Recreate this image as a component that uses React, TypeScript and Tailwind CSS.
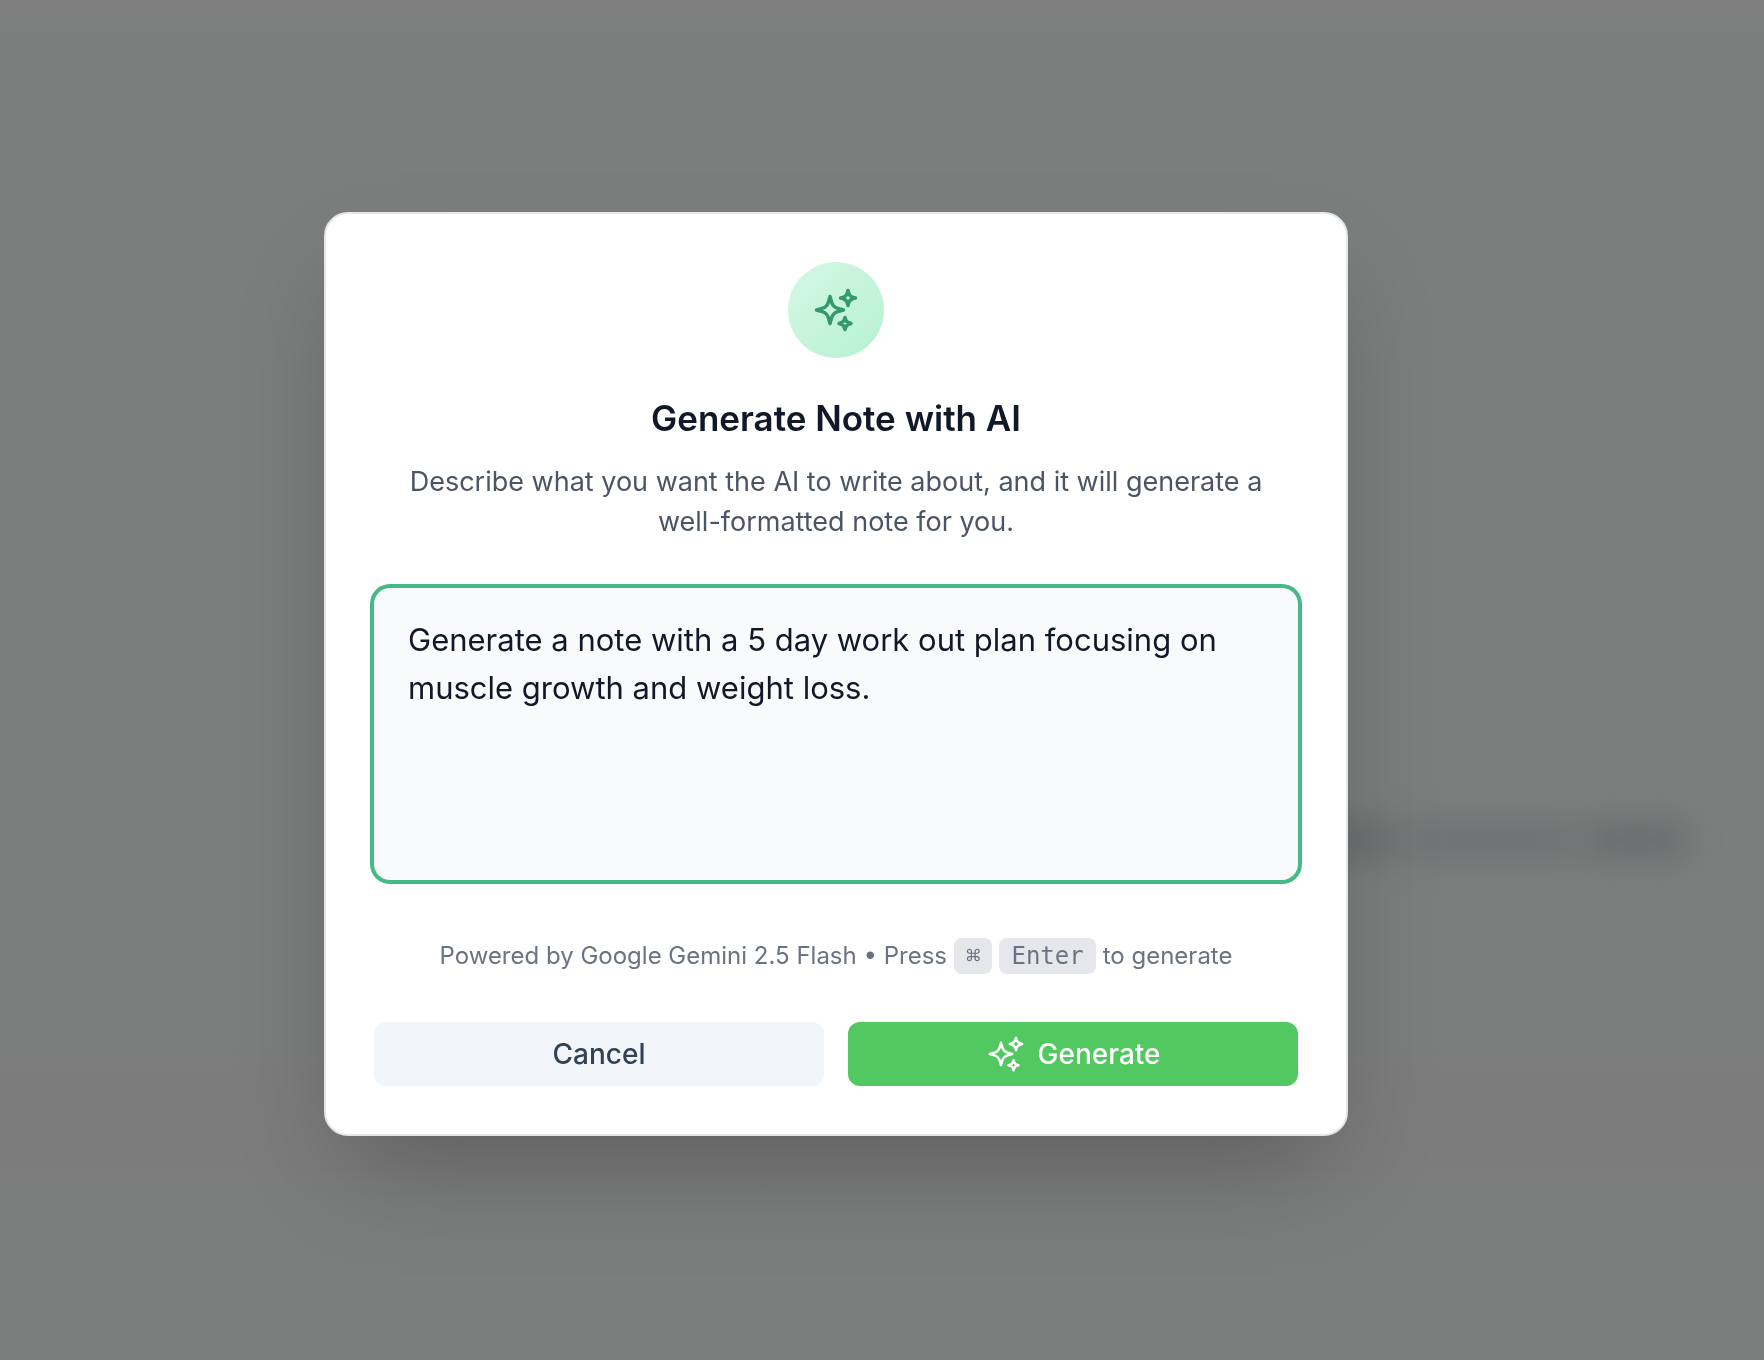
import React, { useState } from 'react';
import { HiOutlineSparkles } from 'react-icons/hi2';

// Empty state of the editor, seen blurred behind the dialog
const EditorBackdrop: React.FC = () => (
  <div
    className="flex min-h-screen flex-col bg-[linear-gradient(#7b7e7c_77%,#7d7c7c_79%,#7d7c7c_86%,#7b7e7c_88%)]"
    aria-hidden="true"
  >
    <div className="h-10 bg-gradient-to-b from-[#7f7f7f] to-[#7b7e7c]" />
    <div className="flex flex-1 items-center justify-end pt-70 pr-20">
      <div className="flex gap-3 blur-[16px]">
        <div className="h-8 w-30 bg-[#6b6b6e]" />
        <div className="h-8 w-42 bg-[#6e6e72]" />
        <div className="h-8 w-24 bg-[#69696d]" />
      </div>
    </div>
  </div>
);

const GenerateNoteDialog: React.FC = () => {
  const [prompt, setPrompt] = useState(
    'Generate a note with a 5 day work out plan focusing on muscle growth and weight loss.'
  );

  return (
    <div
      role="dialog"
      aria-labelledby="dialog-title"
      className="flex w-full max-w-5xl flex-col items-center rounded-3xl border-2 border-[#e4e6ea] bg-white p-12 shadow-[0_50px_100px_-24px_rgba(0,0,0,0.25)]"
    >
      <div className="flex h-24 w-24 items-center justify-center rounded-full bg-gradient-to-br from-[#d6f8e5] to-[#b5f1d1]">
        <HiOutlineSparkles className="h-12 w-12 text-[#35996b]" strokeWidth={1.75} />
      </div>

      <h2 id="dialog-title" className="mt-9 text-[35px] leading-[48px] font-semibold text-[#111827]">
        Generate Note with AI
      </h2>
      <p className="mt-5 px-6 text-center text-[27px] leading-[40px] text-[#4b5563]">
        Describe what you want the AI to write about, and it will generate a well-formatted note for you.
      </p>

      <textarea
        aria-label="Note prompt"
        value={prompt}
        onChange={(e) => setPrompt(e.target.value)}
        className="mt-[46px] block h-[292px] w-full resize-none rounded-2xl bg-[#f9fafc] px-[34px] py-7 text-[31px] leading-[48px] text-[#111827] ring-4 ring-[#45b986] outline-none"
      />

      <p className="mt-[58px] flex items-center gap-[7px] text-[24px] leading-[36px] text-[#6b7280]">
        <span>Powered by Google Gemini 2.5 Flash • Press</span>
        <kbd className="rounded-lg bg-[#e5e7eb] px-3 font-['DejaVu_Sans_Mono',monospace]">⌘</kbd>
        <kbd className="rounded-lg bg-[#e5e7eb] px-3 font-['DejaVu_Sans_Mono',monospace]">Enter</kbd>
        <span>to generate</span>
      </p>

      <div className="mt-12 grid w-full grid-cols-2 gap-6 text-[28px] leading-[40px] font-medium">
        <button type="button" className="h-16 rounded-xl bg-[#f2f5fa] text-[#334155]">
          Cancel
        </button>
        <button type="button" className="flex h-16 items-center justify-center gap-3 rounded-xl bg-[#51c860] text-white">
          <HiOutlineSparkles className="h-10 w-10" />
          Generate
        </button>
      </div>
    </div>
  );
};

export default function App() {
  return (
    <div className="font-['Inter',sans-serif]">
      <EditorBackdrop />
      <div className="fixed inset-0 flex items-center justify-center pr-[92px] pb-3">
        <GenerateNoteDialog />
      </div>
    </div>
  );
}
